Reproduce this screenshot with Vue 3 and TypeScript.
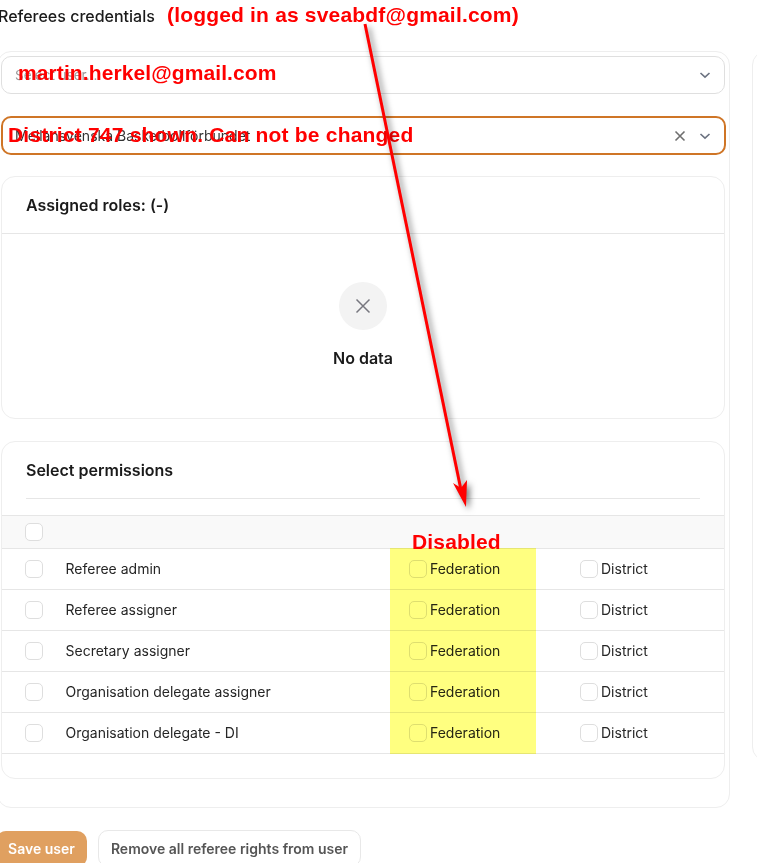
<template>
  <div class="page">
    <h2 class="heading">Referees credentials</h2>

    <div class="columns">
      <section class="outer">
        <div class="select">
          <span class="placeholder">Select user...</span>
          <svg class="chevron" viewBox="0 0 12 8"><path d="M1.5 2 6 6.2 10.5 2" /></svg>
        </div>
        <div class="select active">
          <span class="value">Mellansvenska Basketbollförbundet</span>
          <svg class="clear" viewBox="0 0 12 12"><path d="M1.5 1.5 10.5 10.5M10.5 1.5 1.5 10.5" /></svg>
          <svg class="chevron" viewBox="0 0 12 8"><path d="M1.5 2 6 6.2 10.5 2" /></svg>
        </div>

        <div class="card roles">
          <div class="card-title bordered">Assigned roles: (-)</div>
          <div class="empty">
            <div class="empty-icon">
              <svg viewBox="0 0 16 16"><path d="M1.5 1.5 14.5 14.5M14.5 1.5 1.5 14.5" /></svg>
            </div>
            <div class="empty-text">No data</div>
          </div>
        </div>

        <div class="card permissions">
          <div class="card-title">Select permissions</div>
          <div class="rule"></div>
          <div class="table-head"><span class="check"></span></div>
          <div v-for="name in permissions" :key="name" class="row">
            <span class="check"></span>
            <span class="name">{{ name }}</span>
            <label class="option"><span class="check"></span>Federation</label>
            <label class="option"><span class="check"></span>District</label>
          </div>
        </div>
      </section>
      <aside class="side"></aside>
    </div>

    <div class="actions">
      <button class="save">Save user</button>
      <button class="remove">Remove all referee rights from user</button>
    </div>

    <!-- annotations drawn on top of the screenshot -->
    <div class="highlight"></div>
    <span class="note note-login">(logged in as sveabdf@gmail.com)</span>
    <span class="note note-user">martin.herkel@gmail.com</span>
    <span class="note note-district">District 747 shown. Can not be changed</span>
    <span class="note note-disabled">Disabled</span>
    <svg class="arrow" viewBox="0 0 757 863">
      <path class="shaft" d="M365 24 461 490" />
      <path class="head" d="M466 507 453 483 461 488 467 480Z" />
    </svg>
  </div>
</template>

<script setup lang="ts">
const permissions: string[] = [
  'Referee admin',
  'Referee assigner',
  'Secretary assigner',
  'Organisation delegate assigner',
  'Organisation delegate - DI',
];
</script>

<style>
html,
body {
  margin: 0;
  background: #fff;
  overflow: hidden;
}
</style>

<style scoped>
.page {
  position: relative;
  width: 757px;
  height: 863px;
  overflow: hidden;
  font-family: Inter, 'Liberation Sans', sans-serif;
  font-size: 14px;
  color: #1f1f1f;
  background: #fff;
}

.heading {
  margin: 0;
  padding: 6px 0 0 0;
  margin-left: -2px;
  height: 51px;
  box-sizing: border-box;
  font-size: 16px;
  line-height: 20px;
  font-weight: 500;
  color: #1a1a1a;
}

.columns {
  display: flex;
  gap: 22px;
  margin-left: -3px;
  align-items: flex-start;
}

.outer {
  flex: none;
  width: 733px;
  height: 757px;
  box-sizing: border-box;
  padding: 4px 3px;
  border: 1px solid #eeeeee;
  border-radius: 14px;
}

.side {
  flex: none;
  width: 40px;
  height: 708px;
  border: 1px solid #eeeeee;
  border-radius: 14px;
}

.select {
  display: flex;
  align-items: center;
  height: 38px;
  box-sizing: border-box;
  width: 724px;
  padding: 0 13px;
  border: 1px solid #dfdfdf;
  border-radius: 10px;
}

.select.active {
  height: 39px;
  margin-top: 22px;
  width: 725px;
  border: 2px solid #cf7526;
  padding: 0 13px 0 12px;
}

.placeholder {
  flex: 1;
  font-size: 13.5px;
  color: #9a9a9a;
}

.value {
  flex: 1;
  font-size: 14px;
  color: #333;
}

.chevron {
  width: 12px;
  height: 8px;
  fill: none;
  stroke: #6b7280;
  stroke-width: 1.6;
}

.clear {
  width: 12px;
  height: 12px;
  margin-right: 13px;
  fill: none;
  stroke: #6f6f6f;
  stroke-width: 1.6;
}

.card {
  width: 724px;
  box-sizing: border-box;
  border: 1px solid #eeeeee;
  border-radius: 14px;
  background: #fff;
}

.roles {
  height: 243px;
  margin-top: 21px;
}

.permissions {
  height: 338px;
  margin-top: 22px;
}

.card-title {
  display: flex;
  align-items: center;
  height: 56px;
  padding: 0 24px;
  font-size: 16px;
  font-weight: 600;
  color: #1a1a1a;
}

.card-title.bordered {
  border-bottom: 1px solid #e6e6e6;
}

.empty {
  display: flex;
  flex-direction: column;
  align-items: center;
  padding-top: 48px;
}

.empty-icon {
  display: flex;
  align-items: center;
  justify-content: center;
  width: 48px;
  height: 48px;
  border-radius: 50%;
  background: #f3f3f3;
}

.empty-icon svg {
  width: 16px;
  height: 16px;
  fill: none;
  stroke: #77777f;
  stroke-width: 1.5;
}

.empty-text {
  margin-top: 17px;
  font-size: 16px;
  line-height: 22px;
  font-weight: 600;
  color: #1a1a1a;
}

.rule {
  height: 1px;
  margin: 0 24px 16px;
  background: #e6e6e6;
}

.table-head {
  display: flex;
  align-items: center;
  height: 34px;
  box-sizing: border-box;
  padding: 0 23px;
  background: #f9f9f9;
  border-top: 1px solid #e6e6e6;
  border-bottom: 1px solid #e6e6e6;
}

.row {
  display: grid;
  grid-template-columns: 40px 344px 171px 1fr;
  align-items: center;
  height: 41px;
  box-sizing: border-box;
  padding-left: 23px;
  border-bottom: 1px solid #e6e6e6;
  font-size: 14px;
  line-height: 20px;
  color: #262626;
}

.name {
  padding-left: 0.5px;
}

.check {
  display: block;
  flex: none;
  width: 18px;
  height: 18px;
  box-sizing: border-box;
  border: 1px solid #dedede;
  border-radius: 5px;
  background: #fff;
}

.option {
  display: flex;
  align-items: center;
  gap: 3px;
}

.actions {
  display: flex;
  align-items: flex-end;
  gap: 11px;
  margin: 22px 0 0 -4px;
}

button {
  height: 36px;
  padding: 0;
  border-radius: 10px;
  font-family: inherit;
  font-size: 14px;
  font-weight: 600;
  white-space: nowrap;
  flex: none;
}

.save {
  width: 91px;
  padding-bottom: 2px;
  border: none;
  background: #e0a060;
  color: #fff;
}

.remove {
  height: 37px;
  width: 263px;
  border: 1px solid #e8e8e8;
  background: #fff;
  color: #555;
}

.highlight {
  position: absolute;
  left: 390px;
  top: 548px;
  width: 146px;
  height: 206px;
  background: #ffff80;
  mix-blend-mode: multiply;
}

.note {
  position: absolute;
  font-family: 'Liberation Sans', Arial, sans-serif;
  font-size: 21px;
  line-height: 24px;
  letter-spacing: 0.15px;
  font-weight: 700;
  color: #ff0000;
  white-space: nowrap;
}

.note-login {
  left: 167px;
  top: 3px;
  letter-spacing: 0.18px;
}

.note-user {
  left: 18px;
  top: 61px;
  letter-spacing: 0.1px;
}

.note-district {
  left: 8px;
  top: 123px;
  letter-spacing: 0.2px;
}

.note-disabled {
  left: 412px;
  top: 530px;
}

.arrow {
  position: absolute;
  left: 0;
  top: 0;
  width: 757px;
  height: 863px;
  pointer-events: none;
  filter: drop-shadow(3px 3px 3px rgba(0, 0, 0, 0.55));
}

.shaft {
  fill: none;
  stroke: #ff0000;
  stroke-width: 3;
}

.head {
  fill: #ff0000;
}
</style>
